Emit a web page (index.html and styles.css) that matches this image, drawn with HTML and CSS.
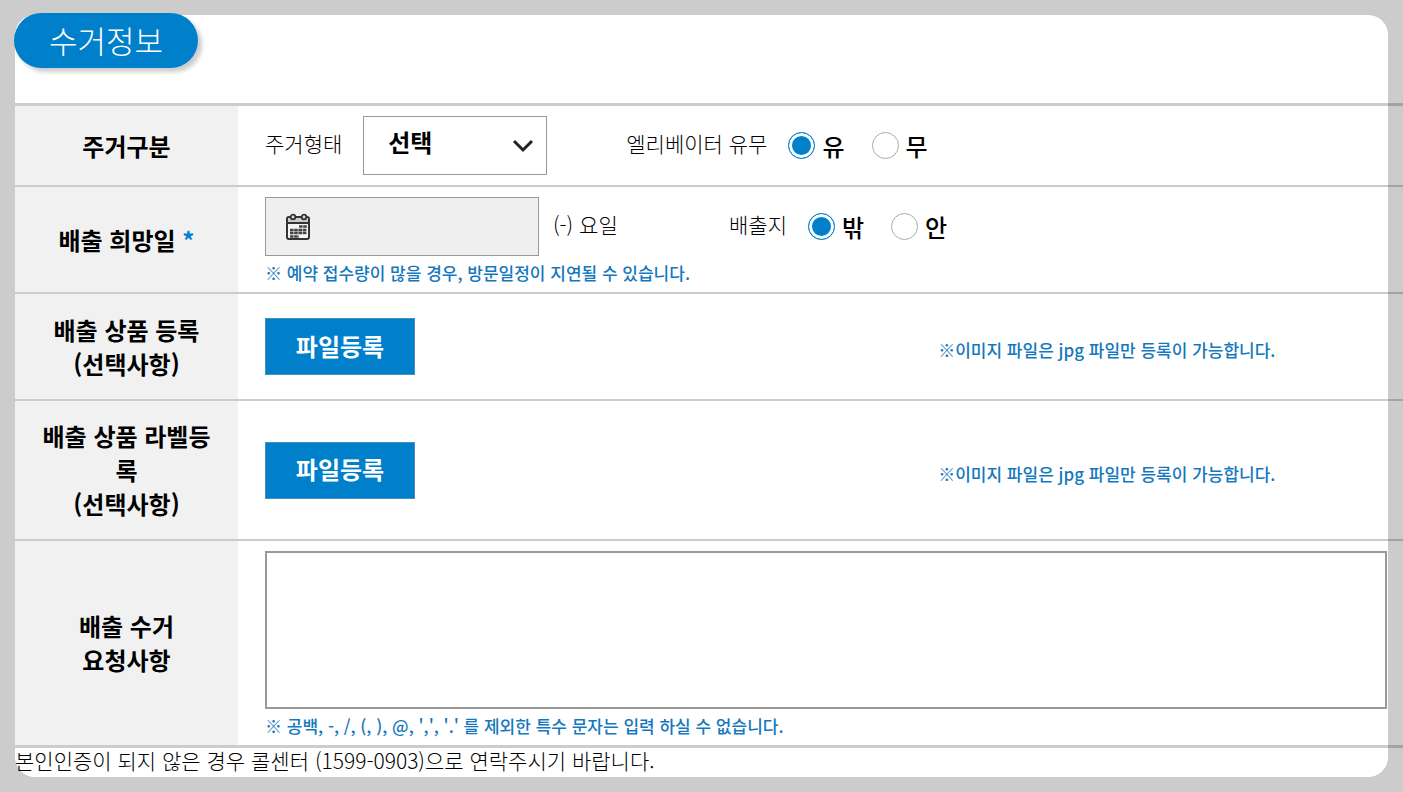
FILE: index.html
```
<!DOCTYPE html>
<html lang="ko">
<head>
    <meta charset="UTF-8">
    <meta name="viewport" content="width=device-width, initial-scale=1.0">
    <title>수거정보</title>
    <link rel="stylesheet" href="styles.css">
</head>
<body>
    <form class="panel">
        <h1 class="title">수거정보</h1>

        <div class="rows">
            <!-- housing type -->
            <div class="row">
                <div class="head">주거구분</div>
                <div class="field">
                    <div class="line">
                        <label class="label" for="houseType">주거형태</label>
                        <div class="select-box">
                            <select id="houseType">
                                <option>선택</option>
                            </select>
                            <svg class="chevron" viewBox="0 0 22 14" aria-hidden="true">
                                <path d="M2 2l9 9 9-9" fill="none" stroke="#222" stroke-width="3"/>
                            </svg>
                        </div>
                        <div class="choices elevator" role="radiogroup" aria-labelledby="elevatorLabel">
                            <span class="label" id="elevatorLabel">엘리베이터 유무</span>
                            <label class="radio"><input type="radio" name="elevator" checked>유</label>
                            <label class="radio"><input type="radio" name="elevator">무</label>
                        </div>
                    </div>
                </div>
            </div>

            <!-- pickup date -->
            <div class="row">
                <div class="head"><label for="pickupDate">배출 희망일 <span class="required">*</span></label></div>
                <div class="field">
                    <div class="line">
                        <div class="date-box">
                            <svg class="calendar" viewBox="0 0 26 28" aria-hidden="true">
                                <rect x="2" y="4" width="22" height="22" rx="2" fill="#f4f4f4" stroke="#333" stroke-width="2"/>
                                <path d="M3 5h20v5H3z" fill="#ccc"/>
                                <path d="M2 10h22" stroke="#333" stroke-width="2"/>
                                <path d="M10 4h7" stroke="#333" stroke-width="2"/>
                                <circle cx="8" cy="4" r="2.3" fill="#ddd" stroke="#333" stroke-width="1.8"/>
                                <circle cx="19" cy="4" r="2.3" fill="#ddd" stroke="#333" stroke-width="1.8"/>
                                <path d="M14 13.5h8M5 17h17M5 20h17M5 23.5h9" stroke="#444" stroke-width="2.4" stroke-dasharray="3.6 .6"/>
                            </svg>
                            <input type="text" id="pickupDate" readonly>
                        </div>
                        <span class="label weekday">(-) 요일</span>
                        <div class="choices" role="radiogroup" aria-labelledby="placeLabel">
                            <span class="label" id="placeLabel">배출지</span>
                            <label class="radio"><input type="radio" name="place" checked>밖</label>
                            <label class="radio"><input type="radio" name="place">안</label>
                        </div>
                    </div>
                    <p class="note">※ 예약 접수량이 많을 경우, 방문일정이 지연될 수 있습니다.</p>
                </div>
            </div>

            <!-- file uploads -->
            <div class="row">
                <div class="head">배출 상품 등록<br>(선택사항)</div>
                <div class="field upload">
                    <button type="button" class="file-button">파일등록</button>
                    <p class="note">※이미지 파일은 jpg 파일만 등록이 가능합니다.</p>
                </div>
            </div>
            <div class="row">
                <div class="head">배출 상품 라벨등록<br>(선택사항)</div>
                <div class="field upload">
                    <button type="button" class="file-button">파일등록</button>
                    <p class="note">※이미지 파일은 jpg 파일만 등록이 가능합니다.</p>
                </div>
            </div>

            <!-- requests -->
            <div class="row">
                <div class="head"><label for="request">배출 수거<br>요청사항</label></div>
                <div class="field">
                    <textarea id="request"></textarea>
                    <p class="note">※ 공백, -, /, (, ), @, ',', '.' 를 제외한 특수 문자는 입력 하실 수 없습니다.</p>
                </div>
            </div>
        </div>

        <p class="contact">본인인증이 되지 않은 경우 콜센터 (1599-0903)으로 연락주시기 바랍니다.</p>
    </form>
</body>
</html>
```
FILE: styles.css
```
* {
    box-sizing: border-box;
}
body {
    margin: 0;
    padding: 15px;
    background-color: #ccc;
    color: #000;
    font-family: "Noto Sans CJK KR", sans-serif;
}
.panel {
    background-color: #fff;
    border-radius: 20px;
}
.title {
    display: inline-block;
    margin: -2px 0 35px -1px;
    padding: 0 35px 2px;
    border-radius: 28px;
    background-color: #0080cb;
    box-shadow: 4px 4px 4px rgba(0, 0, 0, 0.2);
    color: #fff;
    font-size: 31px;
    font-weight: 300;
    line-height: 53px;
    vertical-align: top;
}
/* the lines run on to the edge of the window */
.rows {
    margin-right: -15px;
    border-top: 3px solid rgba(0, 0, 0, 0.2);
    border-bottom: 1px solid rgba(0, 0, 0, 0.2);
}
.row {
    display: flex;
    border-bottom: 2px solid rgba(0, 0, 0, 0.2);
}
.head {
    display: flex;
    align-items: center;
    justify-content: center;
    flex: none;
    width: 223px;
    padding: 18px 24px;
    background-color: #f1f1f1;
    font-size: 24px;
    font-weight: 700;
    line-height: 34px;
    text-align: center;
    word-break: break-all;
}
.required {
    color: #0080cb;
}
.field {
    flex: 1;
    padding: 10px 16px 0 27px;
}
.line {
    display: flex;
    align-items: center;
    height: 59px;
}
.row:first-child .field {
    padding-bottom: 10px;
}
.label {
    padding-bottom: 5px;
    font-size: 21px;
    font-weight: 300;
    line-height: 30px;
}
.select-box {
    position: relative;
    width: 184px;
    height: 59px;
    margin-left: 21px;
}
select {
    width: 100%;
    height: 100%;
    padding: 0 40px 8px 24px;
    border: 1px solid #999;
    border-radius: 0;
    background-color: #fff;
    color: #000;
    font: 700 24px "Noto Sans CJK KR", sans-serif;
    appearance: none;
}
.chevron {
    position: absolute;
    right: 13px;
    top: 23px;
    width: 22px;
    height: 14px;
    pointer-events: none;
}
.choices {
    display: flex;
    align-items: center;
}
.choices .label {
    margin-right: 21px;
}
.elevator {
    margin-left: 79px;
}
.radio {
    display: flex;
    align-items: center;
    gap: 7px;
    margin-right: 27px;
    font-size: 24px;
    font-weight: 500;
    line-height: 34px;
}
.radio input {
    width: 27px;
    height: 27px;
    margin: 0;
    border: 1px solid #aaa;
    border-radius: 50%;
    background-color: #fff;
    appearance: none;
}
.radio input:checked {
    border-color: #0080cb;
    background-color: #0080cb;
    box-shadow: inset 0 0 0 3px #fff;
}
.date-box {
    display: flex;
    align-items: center;
    width: 274px;
    height: 59px;
    padding-left: 19px;
    border: 1px solid #999;
    background-color: #efefef;
}
.calendar {
    flex: none;
    width: 26px;
    height: 28px;
}
.date-box input {
    flex: 1;
    min-width: 0;
    height: 100%;
    border: 0;
    background: none;
    font: 500 24px "Noto Sans CJK KR", sans-serif;
}
.weekday {
    width: 176px;
    margin-left: 14px;
}
.note {
    margin: 0;
    padding-bottom: 2px;
    color: #1478be;
    font-size: 17px;
    font-weight: 500;
    line-height: 34px;
}
.upload {
    display: grid;
    grid-template-columns: 3fr 2fr;
    align-items: center;
    min-height: 105px;
    padding-top: 0;
}
.upload .note {
    padding-top: 9px;
}
.file-button {
    width: 150px;
    height: 57px;
    padding: 0 0 3px;
    border: 1px solid #4a90c0;
    background-color: #0080cb;
    color: #fff;
    font: 700 24px "Noto Sans CJK KR", sans-serif;
    cursor: pointer;
}
textarea {
    display: block;
    width: 100%;
    height: 158px;
    border: 2px solid #999;
    font: 500 17px "Noto Sans CJK KR", sans-serif;
    resize: none;
}
.contact {
    margin: 0;
    padding-bottom: 4px;
    font-size: 21px;
    font-weight: 300;
    line-height: 25px;
}
```
